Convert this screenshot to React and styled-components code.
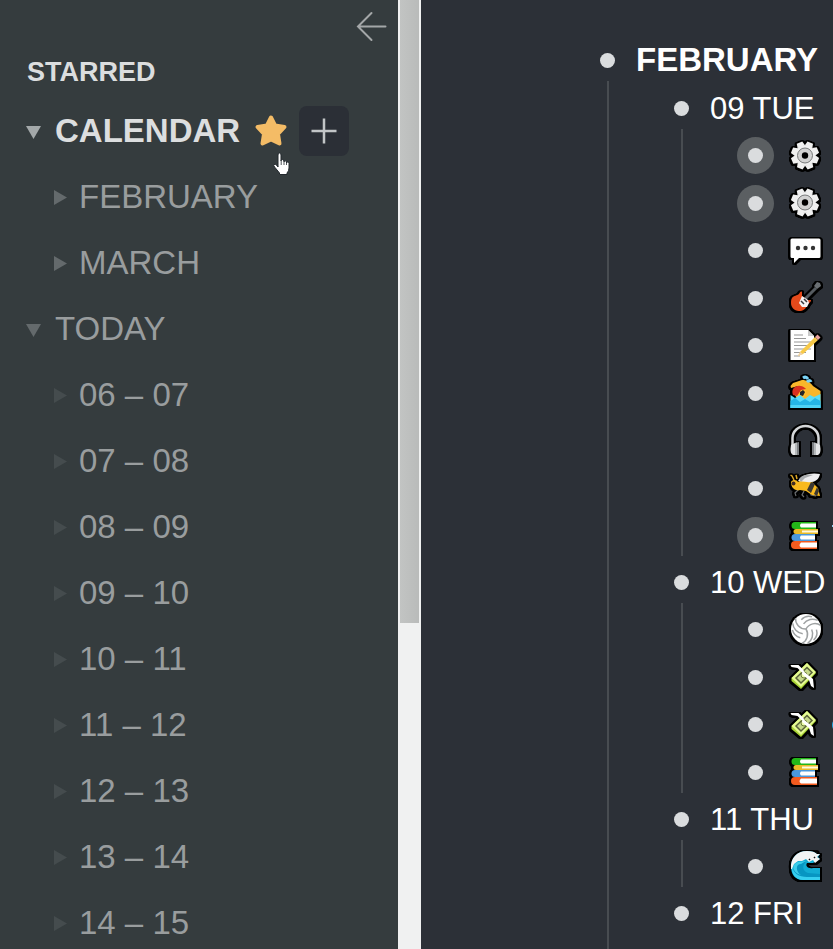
import React from "react";
import styled, { createGlobalStyle } from "styled-components";

const GlobalStyle = createGlobalStyle`
  *, *::before, *::after { box-sizing: border-box; }
  body {
    margin: 0;
    background: #2c3037;
    font-family: "Liberation Sans", Arial, sans-serif;
  }
  ul, h1, h2 { margin: 0; padding: 0; list-style: none; font-size: inherit; }
  button {
    margin: 0;
    padding: 0;
    border: 0;
    background: none;
    color: inherit;
    font: inherit;
    cursor: pointer;
  }
  a { color: inherit; text-decoration: none; }
  svg { display: block; flex: none; }
`;

const Page = styled.div`
  display: grid;
  grid-template-columns: minmax(0, 398fr) 23px minmax(0, 412fr);
  height: 100vh;
  overflow: hidden;
`;

/* Sidebar */

const Sidebar = styled.nav`
  min-height: 0;
  overflow: hidden;
  background: #353c3e;
`;

const SidebarTop = styled.div`
  display: flex;
  justify-content: flex-end;
  padding: 11px 11px 0 0;
`;

const BackButton = styled.button`
  width: 32px;
  height: 32px;
  color: #a4a7a8;
`;

const SectionTitle = styled.h2`
  padding: 13px 0 0 27px;
  height: 55px;
  color: #dcdedf;
  font-size: 27px;
  line-height: 32px;
  font-weight: 700;
`;

const TreeRow = styled.div`
  display: flex;
  align-items: center;
  height: 66px;
  padding-left: ${(p) => (p.$nested ? 49 : 25)}px;
  white-space: nowrap;
`;

const Toggle = styled.button`
  width: 18px;
  height: 18px;
  margin-right: 12px;
  flex: none;
  color: ${(p) => p.$color};
`;

const TreeLink = styled.a`
  color: ${(p) => (p.$active ? "#dcdedf" : "#999d9e")};
  font-size: 33px;
  line-height: 40px;
  font-weight: ${(p) => (p.$active ? 700 : 400)};
`;

const StarButton = styled.button`
  position: relative;
  width: 34px;
  height: 34px;
  margin-left: 14px;
  flex: none;
`;

const Pointer = styled.svg`
  position: absolute;
  left: 18px;
  top: 38px;
  pointer-events: none;
`;

const AddButton = styled.button`
  display: grid;
  place-items: center;
  width: 50px;
  height: 50px;
  margin-left: 11px;
  flex: none;
  border-radius: 8px;
  background: #2b2f36;
  color: #c2c5c7;
`;

/* Scroll track between the panes */

const ScrollTrack = styled.div`
  padding: 0 2px;
  background: #f0f1f1;
`;

const ScrollThumb = styled.div`
  height: ${(p) => p.$share}%;
  background: linear-gradient(to right, #c2c4c3, #b9bbba);
`;

/* Outline */

const Outline = styled.main`
  display: flex;
  flex-direction: column;
  min-height: 0;
  overflow: hidden;
  padding: 33px 0 0 168px;
  background: #2c3037;
  color: #ffffff;
  white-space: nowrap;
`;

const MonthRow = styled.h1`
  display: flex;
  align-items: center;
  gap: 10px;
  flex: none;
  height: 48px;
  padding-top: 6px;
  font-size: 33px;
  line-height: 40px;
  font-weight: 700;
`;

const Branch = styled.ul`
  margin-left: 18px;
  padding-left: 54px;
  border-left: 2px solid #484c51;
`;

const MonthBranch = styled(Branch)`
  flex: 1 0 auto;
  padding-top: 1px;
`;

const DayRow = styled.h2`
  display: flex;
  align-items: center;
  gap: 10px;
  height: 47px;
  padding-top: 6px;
  font-size: 31px;
  line-height: 38px;
  font-weight: 400;
`;

const EntryRow = styled.li`
  display: flex;
  align-items: center;
  gap: 13px;
  height: 47px;
  padding-top: 6px;

  &:nth-child(even) {
    height: 48px;
  }
`;

const BulletButton = styled.button`
  display: grid;
  place-items: center;
  width: 37px;
  height: 37px;
  flex: none;
  border-radius: 50%;
  background: ${(p) => (p.$collapsed ? "#5b5f62" : "transparent")};

  &::before {
    content: "";
    width: 15px;
    height: 15px;
    border-radius: 50%;
    background: #dadcde;
  }
`;

const Glyph = styled.svg`
  width: 36px;
  height: 36px;
  overflow: visible;

  & > g {
    filter: drop-shadow(1px 0 0 #000) drop-shadow(-1px 0 0 #000)
      drop-shadow(0 1px 0 #000) drop-shadow(0 -1px 0 #000)
      drop-shadow(1px 0 0 #000) drop-shadow(-1px 0 0 #000)
      drop-shadow(0 1px 0 #000);
  }
`;

const Trail = styled.svg`
  margin-left: -5px;
`;

const teeth = [0, 45, 90, 135, 180, 225, 270, 315];
const panels = [0, 120, 240];

const glyphs = {
  gear: (
    <>
      {teeth.map((a) => (
        <path key={a} d="M14 8 15 3.500h6L22 8z" fill="#f0f0f0" transform={`rotate(${a + 22} 18 17.500)`} />
      ))}
      <circle cx="18" cy="17.500" r="10.500" fill="#f0f0f0" />
      <circle cx="18" cy="17.500" r="7.500" fill="#d2d2d2" stroke="#77797a" strokeWidth="1" />
      <circle cx="18" cy="17.500" r="3.200" fill="#000" />
    </>
  ),
  speech: (
    <>
      <path d="M5 5.500h27q1.500 0 1.500 1.500v16.500q0 1.500-1.500 1.500H12l-5 5v-5H5q-1.500 0-1.500-1.500V7q0-1.500 1.500-1.500z" fill="#fff" />
      <circle cx="11" cy="15" r="2.200" fill="#333" />
      <circle cx="18.500" cy="15" r="2.200" fill="#333" />
      <circle cx="26" cy="15" r="2.200" fill="#333" />
    </>
  ),
  guitar: (
    <>
      <path d="M16 21 29 8" stroke="#555b60" strokeWidth="3" />
      <path d="M27 6l3-4 3 1 1 3-4 3z" fill="#6a6f73" />
      <path d="M5 18c2-3 5-2 7-4 1-2 2-3 3-2l0 4 5 4 4 0c0 3-3 3-4 5-1 4-4 6-8 6-5 0-8-4-8-8 0-2 0-3 1-5z" fill="#e54a1b" />
      <path d="M15 16l6 4 1 3-2 4-5 0-3-4z" fill="#f4f2f2" />
      <path d="M14 21l3 3m0-5 3 3" stroke="#38383b" strokeWidth="1.500" />
    </>
  ),
  memo: (
    <>
      <path d="M3.500 2H21l6 6v24H3.500z" fill="#fff" />
      <path d="M21 2v6h6z" fill="#c9c9c9" />
      <path d="M7 7h9M7 10.500h12M7 14h17M7 17.500h17M7 21h17M7 24.500h12M7 28h6" stroke="#989898" strokeWidth="1.200" />
      <path d="m11 28 2-4L28 9l3 3-15 14z" fill="#f7c948" />
      <path d="m28 9 2.500-2.500 3 3L31 12z" fill="#e9a3a0" />
      <path d="m11 28 2-4 3 2z" fill="#eed2b0" />
    </>
  ),
  swim: (
    <>
      <path d="M3.500 11 6 8l9-3c5 0 8 2 11 6l7.500 5v14H14l2-16-5-3-7 2z" fill="#f8b62b" />
      <path d="M16 3q3-2 5 1M20 7q3-3 4 0" stroke="#7ad3f7" strokeWidth="3" fill="none" />
      <circle cx="13" cy="17" r="6" fill="#ffc02e" />
      <path d="M6 20c-3-8 6-12 12-7l1 1-5 1-4 6z" fill="#d9301f" />
      <path d="M13 17l3-2 2 2-2 4-3-1z" fill="#252525" />
      <path d="M3.500 20 8 23l5-3 5 4 5-4 4 2 6.500-3v14h-30z" fill="#5bdcf8" />
      <path d="M3.500 26 8 23l5 4 5-3 5 3 5-4 5.500 3v7h-30z" fill="#25b5e6" />
      <path d="M3.500 30h30v3h-30z" fill="#4fd2f4" />
    </>
  ),
  headphones: (
    <>
      <path d="M5.500 25V15a13 12 0 0 1 26 0v10" fill="none" stroke="#d4d6d8" strokeWidth="2.500" />
      <path d="M4 22l4-2v12H6c-2-1-2.500-3-2.500-6zM33 22l-4-2v12h2c2-1 2.500-3 2.500-6z" fill="#e5e6e7" />
      <path d="M8 20l4-1v13H8zM29 20l-4-1v13h4z" fill="#7c7f82" />
      <path d="M8 20l2-.5V32H8zM29 20l-2-.5V32h2z" fill="#b6b9bb" />
    </>
  ),
  bee: (
    <>
      <path d="M12 19l-4 4 1 3M17 21l-2 4 2 2M23 21l1 4 5 1" stroke="#6b6e70" strokeWidth="1.200" fill="none" />
      <path d="M7 10 5 6 3.500 5M10 9 9 5" stroke="#dca727" strokeWidth="1.500" fill="none" />
      <path d="M4 12c2-3 6-2 7 0l7-4 7 4 6 6 2 8-8-1-6-4-6-1c-5 1-9-2-9-8z" fill="#f8b91e" />
      <path d="M20 20l4-8 4 2-4 9zM27 24l3-7 2 4-2 5z" fill="#3b3833" />
      <path d="M11 11c3-6 13-9 22-7-1 6-6 9-13 8z" fill="#eeeef0" />
      <path d="M12 9c4-5 10-5 14-4l-8 3-4 4z" fill="#a9acae" />
      <circle cx="6.500" cy="13.500" r="2" fill="#422d25" />
    </>
  ),
  books: (
    <>
      <path d="M8 4h21v7H8a3.500 3.500 0 0 1 0-7z" fill="#23b719" />
      <path d="M14 5.500h15v4H14q-2-2 0-4z" fill="#fff" />
      <path d="M9 11h22v5H9a2.500 2.500 0 0 1 0-5z" fill="#eabb28" />
      <path d="M15 12.500h16v2H15z" fill="#fff8de" />
      <path d="M8 16h20v7H8a3.500 3.500 0 0 1 0-7z" fill="#4b98dc" />
      <path d="M14 17.500h14v4H14q-2-2 0-4z" fill="#fff" />
      <path d="M8 23h22v8H8a4 4 0 0 1 0-8z" fill="#f35b1f" />
      <path d="M14 24.500h16v5H14q-3-2 0-5z" fill="#fff" />
    </>
  ),
  volleyball: (
    <>
      <circle cx="19" cy="17" r="15" fill="#fff" />
      {panels.map((a) => (
        <path
          key={a}
          d="M19 17c4-5 11-5 15-1M17.500 11.500c4-4 10-4 14.500-1M16 7c4-3 7-3 11-1"
          fill="none"
          stroke="#9fa2a3"
          strokeWidth="1.500"
          transform={`rotate(${a - 10} 19 17)`}
        />
      ))}
    </>
  ),
  money: (
    <>
      <path d="M4.500 19 20 4l9 10-15 16-9.500-8z" fill="#a8d335" />
      <path d="M4.500 19 20 4l9 9-15 15z" fill="#e5fb92" />
      <path d="M9 19 20 8.500l5 5L14 24z" fill="#c6d98a" stroke="#59623a" strokeWidth="1.500" />
      <circle cx="17" cy="16" r="3" fill="#eafca8" stroke="#6c7a3a" />
      <path d="M3.500 6l8 0 5 5 1 4-3-2-4-4-6-1z" fill="#fff" />
      <path d="M16 12l5 4 5 4 1 9-3-2-2-6-7-6z" fill="#fff" />
    </>
  ),
  wave: (
    <>
      <path d="M33 31H16C8 31 4 25 4 18 4 8 11 2 20 2c5 0 8 1 10 3h3l-2 3 2 2-7 4-6 0c-2 3 1 6 6 5h7z" fill="#12acd3" />
      <path d="M4 20C3 9 10 2 20 2c5 0 8 1 10 3h3l-3 3 3 2-5 4-2-3-4 2-3-3-4 2-4 0-4 3-2 5z" fill="#f2f4f4" />
      <path d="M7 19c1-5 7-7 12-6-4 3-4 9 2 11l12 1v4H16c-6 0-9-5-9-9z" fill="#0796c2" />
      <path d="M5 18c1 6 7 10 15 10h13v3H16C9 31 4 25 5 18z" fill="#37cfef" />
      <path d="M14 15c-6 0-5 8 0 11-9-2-10-11-3-13l8-1z" fill="#3bcde9" />
      <path d="M22 10l1 1m4-3 1 1m1-6 1 1" stroke="#111" strokeWidth="1.500" />
    </>
  ),
};

const days = [
  {
    name: "09 TUE",
    entries: [
      { glyph: "gear", label: "Settings", collapsed: true },
      { glyph: "gear", label: "Settings", collapsed: true },
      { glyph: "speech", label: "Conversation" },
      { glyph: "guitar", label: "Guitar" },
      { glyph: "memo", label: "Writing" },
      { glyph: "swim", label: "Swimming" },
      { glyph: "headphones", label: "Listening" },
      { glyph: "bee", label: "Bee" },
      { glyph: "books", label: "Reading", collapsed: true, trail: "line" },
    ],
  },
  {
    name: "10 WED",
    entries: [
      { glyph: "volleyball", label: "Volleyball" },
      { glyph: "money", label: "Expenses" },
      { glyph: "money", label: "Expenses", trail: "dot" },
      { glyph: "books", label: "Reading" },
    ],
  },
  { name: "11 THU", entries: [{ glyph: "wave", label: "Sea" }] },
  { name: "12 FRI", entries: [] },
];

const hours = [6, 7, 8, 9, 10, 11, 12, 13, 14];
const two = (n) => String(n).padStart(2, "0");

const starred = [
  { name: "CALENDAR", open: true, active: true, tone: "#a3a8a9" },
  { name: "FEBRUARY", nested: true, tone: "#646a6c" },
  { name: "MARCH", nested: true, tone: "#646a6c" },
  { name: "TODAY", open: true, tone: "#646a6c" },
  ...hours.map((h) => ({ name: `${two(h)} – ${two(h + 1)}`, nested: true, tone: "#454c4e" })),
];

function StarredItem({ item }) {
  return (
    <li>
      <TreeRow $nested={item.nested}>
        <Toggle $color={item.tone} aria-label={`Toggle ${item.name}`} aria-expanded={!!item.open}>
          <svg width="18" height="18" viewBox="0 0 18 18" fill="currentColor" aria-hidden="true">
            <path d={item.open ? "M1 4h15L8.500 17z" : "M5 2v15l13-7.500z"} />
          </svg>
        </Toggle>
        <TreeLink href="#" $active={item.active}>{item.name}</TreeLink>
        {item.active && (
          <>
            <StarButton aria-label="Unstar">
              <svg width="34" height="34" viewBox="0 0 34 34" aria-hidden="true">
                <path
                  d="M17 3.500 21 11.500 30.500 13 24 20 25.500 29.500 17 25.500 8.500 29.500 10 20 3.500 13 13 11.500z"
                  fill="#f4bc66"
                  stroke="#f4bc66"
                  strokeWidth="4"
                  strokeLinejoin="round"
                />
              </svg>
              <Pointer width="18" height="24" viewBox="0 0 18 24" aria-hidden="true">
                <path
                  d="M6 15V3q0-2 1.500-2T9 3v6q0-1.500 1.300-1.500T12 9v1q0-1.200 1.200-1.200T14.500 10v1q0-1 1.200-1T17 11.500V16q0 3-2 5v1.500H7.500V21L3 15.500q-2-2-1-3t3 1z"
                  fill="#fff"
                  stroke="#22282d"
                />
                <path d="M9.200 9v4M12 10v3M14.500 11v2" stroke="#22282d" strokeWidth=".8" />
              </Pointer>
            </StarButton>
            <AddButton aria-label="Add">
              <svg width="26" height="26" viewBox="0 0 26 26" fill="none" stroke="currentColor" strokeWidth="2.500" aria-hidden="true">
                <path d="M13 .5v25M.5 13h25" />
              </svg>
            </AddButton>
          </>
        )}
      </TreeRow>
    </li>
  );
}

function Entry({ entry }) {
  return (
    <EntryRow>
      <BulletButton $collapsed={entry.collapsed} aria-label={`Open ${entry.label}`} />
      <Glyph viewBox="0 0 36 36" role="img" aria-label={entry.label}>
        <g>{glyphs[entry.glyph]}</g>
      </Glyph>
      {entry.trail && (
        <Trail width="16" height="26" viewBox="0 0 16 26" aria-hidden="true">
          {entry.trail === "dot" ? (
            <circle cx="8" cy="13" r="7" fill="#26a9e8" />
          ) : (
            <path d="M1 2h14v2H1z" fill="#8ccbed" />
          )}
        </Trail>
      )}
    </EntryRow>
  );
}

export default function App() {
  return (
    <Page>
      <GlobalStyle />
      <Sidebar aria-label="Starred">
        <SidebarTop>
          <BackButton aria-label="Hide sidebar">
            <svg width="32" height="32" viewBox="0 0 32 32" fill="none" stroke="currentColor" strokeWidth="2" strokeLinecap="round" aria-hidden="true">
              <path d="M16.500 2 3 15.500 16.500 29M3 15.500h27.500" />
            </svg>
          </BackButton>
        </SidebarTop>
        <SectionTitle>STARRED</SectionTitle>
        <ul>
          {starred.map((item) => (
            <StarredItem key={item.name} item={item} />
          ))}
        </ul>
      </Sidebar>
      <ScrollTrack>
        <ScrollThumb $share={65.6} />
      </ScrollTrack>
      <Outline>
        <MonthRow>
          <BulletButton aria-label="Open February" />
          FEBRUARY
        </MonthRow>
        <MonthBranch>
          {days.map((day) => (
            <li key={day.name}>
              <DayRow>
                <BulletButton aria-label={`Open ${day.name}`} />
                {day.name}
              </DayRow>
              {day.entries.length > 0 && (
                <Branch>
                  {day.entries.map((entry, i) => (
                    <Entry key={i} entry={entry} />
                  ))}
                </Branch>
              )}
            </li>
          ))}
        </MonthBranch>
      </Outline>
    </Page>
  );
}
